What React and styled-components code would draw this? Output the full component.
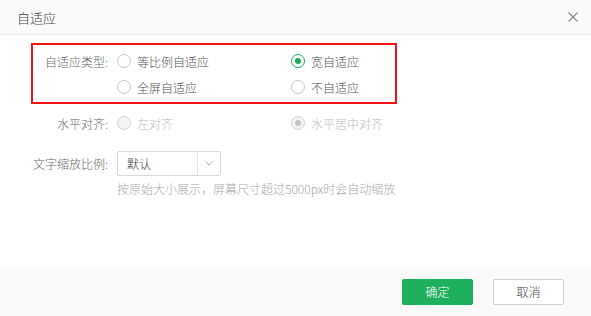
import React from 'react'
import styled, { createGlobalStyle } from 'styled-components'

const GlobalStyle = createGlobalStyle`
  html, body {
    margin: 0;
    padding: 0;
    background: #fff;
  }
  body {
    font-family: "Noto Sans CJK SC", "Noto Sans", sans-serif;
    font-size: 12px;
    font-weight: 300;
    color: #333;
  }
`

function Radio({ checked, disabled, label }) {
  return (
    <Option disabled={disabled}>
      <Circle checked={checked} disabled={disabled} />
      <span>{label}</span>
    </Option>
  )
}

export default function App() {
  return (
    <>
      <GlobalStyle />
      <Dialog>
        <Header>
          <Title>自适应</Title>
          <Close>
            <svg width="10" height="10" viewBox="0 0 10 10">
              <path d="M0.5 0.5L9.5 9.5M9.5 0.5L0.5 9.5" stroke="#8a8a8a" strokeWidth="1.1" />
            </svg>
          </Close>
        </Header>
        <Body>
          <Highlight>
            <Row>
              <Label>自适应类型:</Label>
              <Options>
                <Radio label="等比例自适应" />
                <Radio checked label="宽自适应" />
              </Options>
            </Row>
            <Row>
              <Label />
              <Options>
                <Radio label="全屏自适应" />
                <Radio label="不自适应" />
              </Options>
            </Row>
          </Highlight>
          <Row top={6}>
            <Label>水平对齐:</Label>
            <Options>
              <Radio disabled label="左对齐" />
              <Radio disabled checked label="水平居中对齐" />
            </Options>
          </Row>
          <Row top={14}>
            <Label>文字缩放比例:</Label>
            <Select>
              <SelectValue>默认</SelectValue>
              <SelectArrow>
                <svg width="8" height="5" viewBox="0 0 8 5">
                  <path d="M0.5 0.5L4 4L7.5 0.5" fill="none" stroke="#b0b0b0" strokeWidth="1" />
                </svg>
              </SelectArrow>
            </Select>
          </Row>
          <Hint>按原始大小展示，屏幕尺寸超过5000px时会自动缩放</Hint>
        </Body>
        <Footer>
          <Button primary>确定</Button>
          <Button>取消</Button>
        </Footer>
      </Dialog>
    </>
  )
}

const Dialog = styled.div`
  width: 591px;
  height: 316px;
  display: flex;
  flex-direction: column;
  background: #fff;
`
const Header = styled.div`
  height: 34px;
  flex-shrink: 0;
  display: flex;
  align-items: center;
  justify-content: space-between;
  padding: 0 13px 0 17px;
  background: #fafafa;
  border-bottom: 1px solid #e9e9ef;
`
const Title = styled.div`
  font-size: 13px;
  color: #444;
`
const Close = styled.div`
  display: flex;
  cursor: pointer;
`
const Body = styled.div`
  flex: 1;
  padding: 8px 0 0 33px;
`
const Highlight = styled.div`
  width: 362px;
  margin-left: -2px;
  padding: 3px 0 2px;
  border: 2px solid #f01414;
`
const Row = styled.div`
  display: flex;
  align-items: center;
  min-height: 26px;
  margin-top: ${p => (p.top ? p.top : 0)}px;
`
const Label = styled.div`
  width: 84px;
  flex-shrink: 0;
  box-sizing: border-box;
  padding-right: 9px;
  text-align: right;
  color: #6a6a6a;
  white-space: nowrap;
`
const Options = styled.div`
  display: grid;
  grid-template-columns: 174px auto;
`
const Option = styled.label`
  display: flex;
  align-items: center;
  gap: 6px;
  color: ${p => (p.disabled ? '#bcbcbc' : '#555')};
  white-space: nowrap;
`
const Circle = styled.span`
  position: relative;
  width: 12px;
  height: 12px;
  border-radius: 50%;
  border: 1px solid
    ${p => (p.checked && !p.disabled ? '#21a95c' : p.disabled ? '#d6d6d6' : '#c8c8c8')};
  background: ${p => (p.disabled ? '#f3f3f3' : '#fff')};
  &::after {
    content: '';
    display: ${p => (p.checked ? 'block' : 'none')};
    position: absolute;
    left: 3px;
    top: 3px;
    width: 6px;
    height: 6px;
    border-radius: 50%;
    background: ${p => (p.disabled ? '#c4c4c4' : '#21a95c')};
  }
`
const Select = styled.div`
  display: flex;
  width: 104px;
  height: 25px;
  box-sizing: border-box;
  border: 1px solid #d9d9d9;
  border-radius: 2px;
  background: #fff;
`
const SelectValue = styled.div`
  flex: 1;
  display: flex;
  align-items: center;
  padding-left: 9px;
  color: #444;
`
const SelectArrow = styled.div`
  width: 22px;
  display: flex;
  align-items: center;
  justify-content: center;
  border-left: 1px solid #e2e2e2;
`
const Hint = styled.div`
  margin: 4px 0 0 84px;
  line-height: 18px;
  color: #a8a8a8;
`
const Footer = styled.div`
  height: 49px;
  flex-shrink: 0;
  display: flex;
  align-items: center;
  justify-content: flex-end;
  gap: 20px;
  padding-right: 27px;
  background: #fafafa;
`
const Button = styled.button`
  width: 71px;
  height: 26px;
  box-sizing: border-box;
  border-radius: 2px;
  font-family: inherit;
  font-size: 12px;
  font-weight: 300;
  cursor: pointer;
  border: 1px solid ${p => (p.primary ? '#1fb05e' : '#cfcfcf')};
  background: ${p => (p.primary ? '#1fb05e' : '#fff')};
  color: ${p => (p.primary ? '#fff' : '#444')};
`
